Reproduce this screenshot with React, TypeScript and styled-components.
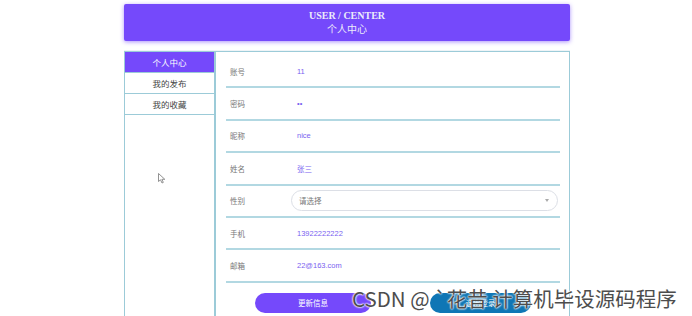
import React from 'react';
import styled, { createGlobalStyle } from 'styled-components';

const GlobalStyle = createGlobalStyle`
  html, body {
    margin: 0;
    padding: 0;
    background: #fff;
    font-family: "Liberation Sans", "Noto Sans CJK SC", sans-serif;
  }
  * { box-sizing: border-box; }
`;

const fields = [
  { label: '账号', value: '11' },
  { label: '密码', value: '••' },
  { label: '昵称', value: 'nice' },
  { label: '姓名', value: '张三' },
  { label: '性别', select: true },
  { label: '手机', value: '13922222222' },
  { label: '邮箱', value: '22@163.com' },
];

const menu = ['个人中心', '我的发布', '我的收藏'];

export default function App() {
  return (
    <Page>
      <GlobalStyle />
      <Wrap>
        <Header>
          <HeaderEn>USER / CENTER</HeaderEn>
          <HeaderCn>个人中心</HeaderCn>
        </Header>
        <Body>
          <Sidebar>
            {menu.map((m, i) => (
              <MenuItem key={m} $active={i === 0}>
                {m}
              </MenuItem>
            ))}
            <Cursor width="8" height="11" viewBox="0 0 8 11">
              <path d="M0.5 0.5 L0.5 8.5 L2.5 6.8 L4 10 L5.3 9.4 L3.9 6.3 L6.8 6.3 Z" fill="#fff" stroke="#777" strokeWidth="0.8" />
            </Cursor>
          </Sidebar>
          <Panel>
            {fields.map((f) => (
              <Row key={f.label}>
                <Label>{f.label}</Label>
                {f.select ? (
                  <Select>
                    <span>请选择</span>
                    <Caret />
                  </Select>
                ) : (
                  <Value>{f.value}</Value>
                )}
              </Row>
            ))}
            <Buttons>
              <Button $bg="#7549fb" $w={116}>更新信息</Button>
              <Button $bg="#0f76b5" $w={101}>退出登录</Button>
            </Buttons>
          </Panel>
        </Body>
      </Wrap>
      <Watermark>CSDN @ `花昔 计算机毕设源码程序</Watermark>
    </Page>
  );
}

const Page = styled.div`
  position: relative;
  width: 692px;
  height: 316px;
  overflow: hidden;
`;

const Wrap = styled.div`
  width: 446px;
  margin-left: 124px;
  padding-top: 4px;
`;

const Header = styled.header`
  height: 37px;
  background: #7549fb;
  border-radius: 2px;
  box-shadow: 0 1px 4px rgba(117, 73, 251, 0.6);
  display: flex;
  flex-direction: column;
  align-items: center;
  justify-content: center;
  color: #ecebfa;
`;

const HeaderEn = styled.div`
  font-family: "Liberation Serif", serif;
  font-weight: bold;
  font-size: 10px;
  line-height: 13px;
`;

const HeaderCn = styled.div`
  font-family: "Noto Sans CJK SC", sans-serif;
  font-size: 10px;
  line-height: 14px;
`;

const Body = styled.div`
  display: flex;
  margin-top: 9px;
  border-top: 1px solid #eef4f7;
`;

const Sidebar = styled.nav`
  position: relative;
  width: 92px;
  height: 280px;
  border: 1px solid #9ccbd8;
  border-right-width: 2px;
  display: flex;
  flex-direction: column;
`;

const MenuItem = styled.div<{ $active?: boolean }>`
  height: 21px;
  display: flex;
  align-items: center;
  justify-content: center;
  font-size: 8.5px;
  color: ${(p) => (p.$active ? '#fff' : '#444')};
  background: ${(p) => (p.$active ? '#7549fb' : '#fff')};
  border-bottom: 1px solid #9ccbd8;
`;

const Cursor = styled.svg`
  position: absolute;
  left: 33px;
  top: 121px;
`;

const Panel = styled.section`
  flex: 1;
  height: 280px;
  border: 1px solid #9ccbd8;
  border-left: none;
  padding: 4px 9px 0 10px;
`;

const Row = styled.div`
  height: 32.4px;
  display: flex;
  align-items: center;
  border-bottom: 2px solid #b2d8e2;
  padding-left: 4px;
`;

const Label = styled.span`
  width: 67px;
  font-size: 7.5px;
  color: #777;
`;

const Value = styled.span`
  font-size: 7.5px;
  color: #7a5ff0;
`;

const Select = styled.div`
  margin-left: -6px;
  width: 267px;
  height: 21px;
  border: 1px solid #dcdfe6;
  border-radius: 11px;
  display: flex;
  align-items: center;
  justify-content: space-between;
  padding: 0 8px 0 7px;
  font-size: 7.5px;
  color: #777;
`;

const Caret = styled.span`
  width: 0;
  height: 0;
  border-left: 2.5px solid transparent;
  border-right: 2.5px solid transparent;
  border-top: 3px solid #aaa;
`;

const Buttons = styled.div`
  display: flex;
  gap: 59px;
  padding: 10px 0 0 29px;
`;

const Button = styled.button<{ $bg: string; $w: number }>`
  width: ${(p) => p.$w}px;
  height: 20px;
  border: none;
  border-radius: 10px;
  background: ${(p) => p.$bg};
  color: #fff;
  font-size: 7.5px;
  font-family: inherit;
  padding: 0;
`;

const Watermark = styled.div`
  position: absolute;
  left: 352px;
  top: 285px;
  font-family: "Noto Sans CJK SC", sans-serif;
  font-size: 20.5px;
  line-height: 26px;
  color: #4d4d4d;
  white-space: nowrap;
  text-shadow: 0 0 2px #fff, 0 0 2px #fff, 0 0 2px #fff;
`;
